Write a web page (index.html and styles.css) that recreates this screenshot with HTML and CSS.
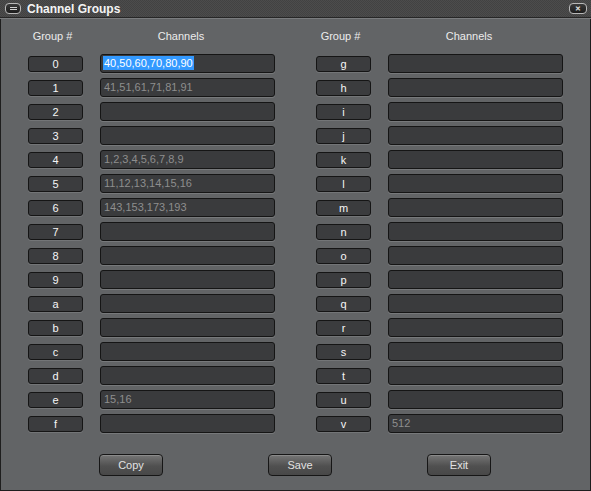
FILE: index.html
```html
<!DOCTYPE html>
<html>
<head>
<meta charset="utf-8">
<link rel="stylesheet" href="styles.css">
</head>
<body>
<div class="window">
  <div class="titlebar">
    <div class="menu-btn"><span></span></div>
    <div class="title">Channel Groups</div>
    <div class="close-btn">&#x2715;</div>
  </div>
  <div class="content">
    <div class="columns">
      <div class="group">
        <div class="row head"><div class="h-label">Group #</div><div class="h-chan">Channels</div></div>
        <div class="row"><div class="label">0</div><div class="input"><span class="sel">40,50,60,70,80,90</span></div></div>
        <div class="row"><div class="label">1</div><div class="input">41,51,61,71,81,91</div></div>
        <div class="row"><div class="label">2</div><div class="input"></div></div>
        <div class="row"><div class="label">3</div><div class="input"></div></div>
        <div class="row"><div class="label">4</div><div class="input">1,2,3,4,5,6,7,8,9</div></div>
        <div class="row"><div class="label">5</div><div class="input">11,12,13,14,15,16</div></div>
        <div class="row"><div class="label">6</div><div class="input">143,153,173,193</div></div>
        <div class="row"><div class="label">7</div><div class="input"></div></div>
        <div class="row"><div class="label">8</div><div class="input"></div></div>
        <div class="row"><div class="label">9</div><div class="input"></div></div>
        <div class="row"><div class="label">a</div><div class="input"></div></div>
        <div class="row"><div class="label">b</div><div class="input"></div></div>
        <div class="row"><div class="label">c</div><div class="input"></div></div>
        <div class="row"><div class="label">d</div><div class="input"></div></div>
        <div class="row"><div class="label">e</div><div class="input">15,16</div></div>
        <div class="row"><div class="label">f</div><div class="input"></div></div>
      </div>
      <div class="group">
        <div class="row head"><div class="h-label">Group #</div><div class="h-chan">Channels</div></div>
        <div class="row"><div class="label">g</div><div class="input"></div></div>
        <div class="row"><div class="label">h</div><div class="input"></div></div>
        <div class="row"><div class="label">i</div><div class="input"></div></div>
        <div class="row"><div class="label">j</div><div class="input"></div></div>
        <div class="row"><div class="label">k</div><div class="input"></div></div>
        <div class="row"><div class="label">l</div><div class="input"></div></div>
        <div class="row"><div class="label">m</div><div class="input"></div></div>
        <div class="row"><div class="label">n</div><div class="input"></div></div>
        <div class="row"><div class="label">o</div><div class="input"></div></div>
        <div class="row"><div class="label">p</div><div class="input"></div></div>
        <div class="row"><div class="label">q</div><div class="input"></div></div>
        <div class="row"><div class="label">r</div><div class="input"></div></div>
        <div class="row"><div class="label">s</div><div class="input"></div></div>
        <div class="row"><div class="label">t</div><div class="input"></div></div>
        <div class="row"><div class="label">u</div><div class="input"></div></div>
        <div class="row"><div class="label">v</div><div class="input">512</div></div>
      </div>
    </div>
    <div class="buttons">
      <div class="btn b-copy">Copy</div>
      <div class="btn b-save">Save</div>
      <div class="btn b-exit">Exit</div>
    </div>
  </div>
</div>
</body>
</html>
```

FILE: styles.css
```css
html, body {
  margin: 0;
  padding: 0;
  background: #2a2a2a;
}
body {
  font-family: "Liberation Sans", Arial, sans-serif;
  width: 591px;
  height: 491px;
  overflow: hidden;
}
.window {
  width: 591px;
  height: 491px;
  box-sizing: border-box;
  display: flex;
  flex-direction: column;
  background: #626466;
  border-left: 1px solid #1e1e1e;
  border-right: 1px solid #1e1e1e;
  border-bottom: 1px solid #1e1e1e;
}
.titlebar {
  height: 17px;
  flex: 0 0 17px;
  display: flex;
  align-items: center;
  background-color: #474747;
  background-image: repeating-conic-gradient(#4c4c4c 0 25%, #424242 0 50%);
  background-size: 2px 2px;
  border-bottom: 1px solid #262626;
  box-shadow: 0 1px 0 #7a7c7e;
  margin-left: -1px;
  margin-right: -1px;
}
.menu-btn {
  width: 14px;
  height: 9px;
  margin-left: 5px;
  border: 1px solid #b8b8b8;
  border-radius: 4px;
  background: linear-gradient(#3a3a3a, #1c1c1c);
  display: flex;
  align-items: center;
  justify-content: center;
}
.menu-btn span {
  width: 7px;
  height: 1px;
  border-top: 1px solid #d0d0d0;
  border-bottom: 1px solid #d0d0d0;
}
.title {
  margin-left: 6px;
  color: #f4f4f4;
  font-weight: bold;
  font-size: 12px;
  flex: 1;
}
.close-btn {
  width: 16px;
  height: 9px;
  margin-right: 4px;
  border: 1px solid #b8b8b8;
  border-radius: 4px;
  background: linear-gradient(#3a3a3a, #1c1c1c);
  color: #e0e0e0;
  font-size: 7px;
  font-weight: bold;
  line-height: 9px;
  text-align: center;
}
.content {
  flex: 1;
  display: flex;
  flex-direction: column;
  padding-left: 27px;
  padding-top: 11px;
}
.columns {
  display: flex;
  gap: 41px;
}
.group {
  display: flex;
  flex-direction: column;
  gap: 5px;
}
.row {
  display: flex;
  align-items: center;
  gap: 17px;
  height: 19px;
}
.row.head {
  height: 13px;
  margin-bottom: 7px;
  color: #ececec;
  font-size: 11px;
}
.h-label {
  width: 55px;
  box-sizing: border-box;
  padding-right: 6px;
  text-align: center;
}
.h-chan {
  width: 175px;
  box-sizing: border-box;
  padding-right: 13px;
  text-align: center;
}
.label {
  width: 55px;
  height: 16px;
  box-sizing: border-box;
  border: 1px solid #151515;
  border-radius: 3px;
  background: #3b3c3e;
  box-shadow: 0 1px 0 #737577;
  color: #f6f6f6;
  font-size: 11px;
  line-height: 14px;
  text-align: center;
}
.input {
  width: 175px;
  height: 19px;
  box-sizing: border-box;
  border: 1px solid #151515;
  border-radius: 3px;
  background: #3a3b3d;
  box-shadow: 0 1px 0 #77797b;
  color: #8e8e8e;
  font-size: 11px;
  line-height: 17px;
  padding-left: 3px;
  white-space: nowrap;
  overflow: hidden;
}
.sel {
  background: #3399ff;
  color: #ffffff;
  display: inline-block;
  line-height: 14px;
  padding: 0 1px;
  margin-left: -1px;
}
.buttons {
  display: flex;
  margin-top: 21px;
  padding-left: 71px;
}
.btn {
  width: 64px;
  height: 22px;
  box-sizing: border-box;
  border: 1px solid #161616;
  border-radius: 4px;
  background: linear-gradient(#767676, #505050 55%, #484848);
  box-shadow: inset 0 1px 0 #8a8a8a;
  color: #e2e2e2;
  font-size: 11px;
  line-height: 20px;
  text-align: center;
}
.b-save { margin-left: 105px; }
.b-exit { margin-left: 95px; }
```
